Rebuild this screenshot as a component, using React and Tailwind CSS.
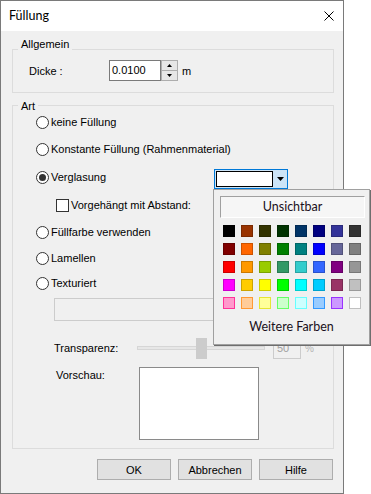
import React from 'react';

// Excel-style palette: fill + 1px darker (or more saturated) frame
const swatches = [
  'bg-[#000000] border-[#000000]', 'bg-[#993300] border-[#7a2900]', 'bg-[#333300] border-[#292900]', 'bg-[#003300] border-[#002900]',
  'bg-[#003366] border-[#002952]', 'bg-[#000080] border-[#000066]', 'bg-[#333399] border-[#29297a]', 'bg-[#333333] border-[#292929]',
  'bg-[#800000] border-[#660000]', 'bg-[#ff6600] border-[#cc5200]', 'bg-[#808000] border-[#666600]', 'bg-[#008000] border-[#006600]',
  'bg-[#008080] border-[#006666]', 'bg-[#0000ff] border-[#0000cc]', 'bg-[#666699] border-[#52527a]', 'bg-[#808080] border-[#666666]',
  'bg-[#ff0000] border-[#cc0000]', 'bg-[#ff9900] border-[#cc7a00]', 'bg-[#99cc00] border-[#7aa300]', 'bg-[#339966] border-[#297a52]',
  'bg-[#33cccc] border-[#29a3a3]', 'bg-[#3366ff] border-[#2952cc]', 'bg-[#800080] border-[#660066]', 'bg-[#969696] border-[#787878]',
  'bg-[#ff00ff] border-[#cc00cc]', 'bg-[#ffcc00] border-[#cca300]', 'bg-[#ffff00] border-[#cccc00]', 'bg-[#00ff00] border-[#00cc00]',
  'bg-[#00ffff] border-[#00cccc]', 'bg-[#00ccff] border-[#00a3cc]', 'bg-[#993366] border-[#7a2952]', 'bg-[#c0c0c0] border-[#9a9a9a]',
  'bg-[#ff99cc] border-[#ff3399]', 'bg-[#ffcc99] border-[#ff9933]', 'bg-[#ffff99] border-[#e6e633]', 'bg-[#ccffcc] border-[#66ff66]',
  'bg-[#ccffff] border-[#66ffff]', 'bg-[#99ccff] border-[#3399ff]', 'bg-[#cc99ff] border-[#9933ff]', 'bg-[#ffffff] border-[#c0c0c0]',
];

const Radio = ({ checked, label }) => (
  <div className="flex h-[16px] items-center">
    <span className="flex h-[13px] w-[13px] shrink-0 items-center justify-center rounded-full border border-[#333333] bg-white">
      {checked && <span className="h-[7px] w-[7px] rounded-full bg-[#333333]" />}
    </span>
    <span className="ml-[2px] whitespace-nowrap leading-[16px]">{label}</span>
  </div>
);

const Group = ({ title, titleTop, className, children }) => (
  <div className={`relative border border-[#dcdcdc] ${className}`}>
    <span className={`absolute left-[5px] bg-[#f0f0f0] px-[3px] leading-[16px] ${titleTop}`}>{title}</span>
    {children}
  </div>
);

const Button = ({ children }) => (
  <div className="flex h-[21px] w-[74px] items-center justify-center border border-[#adadad] bg-[#e1e1e1] leading-[16px]">
    {children}
  </div>
);

const ColorPopup = () => (
  <div className="absolute left-[213px] top-[189px] h-[156px] w-[157px] border border-[#a0a0a0] bg-[#f0f0f0] pl-[6px] pt-[6px] font-['Lato',sans-serif] text-[12.5px] text-[#1a1020] shadow-[1px_1px_0_0_#6e6e6e]">
    <div className="flex h-[22px] w-[145px] items-center justify-center border-b border-l border-r border-t border-b-white border-l-[#a0a0a0] border-r-white border-t-[#a0a0a0] bg-[#f6f6f6]">
      Unsichtbar
    </div>
    <div className="ml-[3px] mt-[7px] grid grid-cols-[repeat(8,12px)] gap-[6px]">
      {swatches.map((cls, i) => (
        <span key={i} className={`h-[12px] w-[12px] border ${cls}`} />
      ))}
    </div>
    <div className="mt-[10px] pr-[6px] text-center leading-[16px]">Weitere Farben</div>
  </div>
);

export default function App() {
  return (
    <div className="relative h-[494px] w-[371px] overflow-hidden bg-white font-['Liberation_Sans',sans-serif] text-[11px] text-black">
      <div className="flex h-[494px] w-[344px] flex-col border border-[#7a7a7a] bg-[#f0f0f0]">
        {/* title bar */}
        <div className="flex h-[30px] shrink-0 items-center justify-between bg-white pl-[8px] pr-[9px]">
          <span className="font-['Lato',sans-serif] text-[12.5px] leading-[16px]">Füllung</span>
          <svg width="10" height="10" viewBox="0 0 10 10">
            <path d="M0.5 0.5L9.5 9.5M9.5 0.5L0.5 9.5" stroke="#000" strokeWidth="1" fill="none" />
          </svg>
        </div>

        <div className="flex flex-col pl-[11px] pr-[9px]">
          <Group title="Allgemein" titleTop="-top-[14px]" className="mt-[18px] h-[44px]">
            <div className="mt-[10px] flex h-[21px] items-center pl-[16px]">
              <span className="w-[80px] leading-[16px]">Dicke :</span>
              <div className="h-[21px] w-[52px] border border-[#7a7a7a] bg-white pl-[2px] leading-[19px]">0.0100</div>
              <div className="flex h-[21px] w-[17px] flex-col border border-[#adadad] bg-[#e6e6e6]">
                <div className="flex flex-1 items-center justify-center border-b border-[#adadad]">
                  <svg width="5" height="3" viewBox="0 0 5 3"><path d="M2.5 0L5 3H0z" fill="#000" /></svg>
                </div>
                <div className="flex flex-1 items-center justify-center">
                  <svg width="5" height="3" viewBox="0 0 5 3"><path d="M0 0h5L2.5 3z" fill="#000" /></svg>
                </div>
              </div>
              <span className="ml-[4px] leading-[16px]">m</span>
            </div>
          </Group>

          <Group title="Art" titleTop="-top-[8px]" className="mt-[12px] h-[344px]">
            <div className="flex flex-col">
              <div className="mt-[8px] pl-[23px]"><Radio label="keine Füllung" /></div>
              <div className="mt-[11px] pl-[23px]"><Radio label="Konstante Füllung (Rahmenmaterial)" /></div>
              <div className="mt-[12px] flex items-start pl-[23px]">
                <div className="w-[178px]"><Radio checked label="Verglasung" /></div>
                <div className="flex h-[20px] w-[74px] border border-[#0078d7] bg-[#cce4f7]">
                  <div className="ml-[1px] mt-[1px] h-[16px] w-[57px] border border-black bg-white" />
                  <div className="flex flex-1 items-center justify-center">
                    <svg width="7" height="4" viewBox="0 0 7 4"><path d="M0 0h7L3.5 4z" fill="#000" /></svg>
                  </div>
                </div>
              </div>
              <div className="mt-[8px] flex h-[16px] items-center pl-[43px]">
                <span className="h-[13px] w-[13px] border border-[#333333] bg-white" />
                <span className="ml-[2px] leading-[16px]">Vorgehängt mit Abstand:</span>
              </div>
              <div className="mt-[11px] pl-[23px]"><Radio label="Füllfarbe verwenden" /></div>
              <div className="mt-[10px] pl-[23px]"><Radio label="Lamellen" /></div>
              <div className="mt-[9px] pl-[23px]"><Radio label="Texturiert" /></div>
              <div className="ml-[41px] mt-[7px] h-[23px] w-[266px] border border-[#cccccc] bg-[#f0f0f0]" />

              <div className="mt-[16px] flex h-[22px] items-center">
                <span className="w-[124px] pl-[41px] leading-[16px]">Transparenz:</span>
                <div className="relative flex h-[21px] w-[128px] items-center">
                  <div className="h-[4px] w-full border border-[#d6d6d6] bg-[#e7e7e7]" />
                  <div className="absolute left-[59px] top-0 h-[21px] w-[11px] bg-[#cccccc]" />
                </div>
                <div className="ml-[8px] h-[21px] w-[28px] border border-[#cccccc] pl-[3px] leading-[19px] text-[#a0a0a0]">50</div>
                <span className="ml-[4px] text-[10px] text-[#b4b4b4]">%</span>
              </div>

              <div className="mt-[8px] flex items-start">
                <span className="w-[126px] pl-[43px] leading-[16px]">Vorschau:</span>
                <div className="h-[73px] w-[120px] border border-[#8a8a8a] bg-white" />
              </div>
            </div>
          </Group>

          <div className="mt-[10px] flex justify-end gap-[7px] pr-[1px]">
            <Button>OK</Button>
            <Button>Abbrechen</Button>
            <Button>Hilfe</Button>
          </div>
        </div>
      </div>

      <ColorPopup />
    </div>
  );
}
